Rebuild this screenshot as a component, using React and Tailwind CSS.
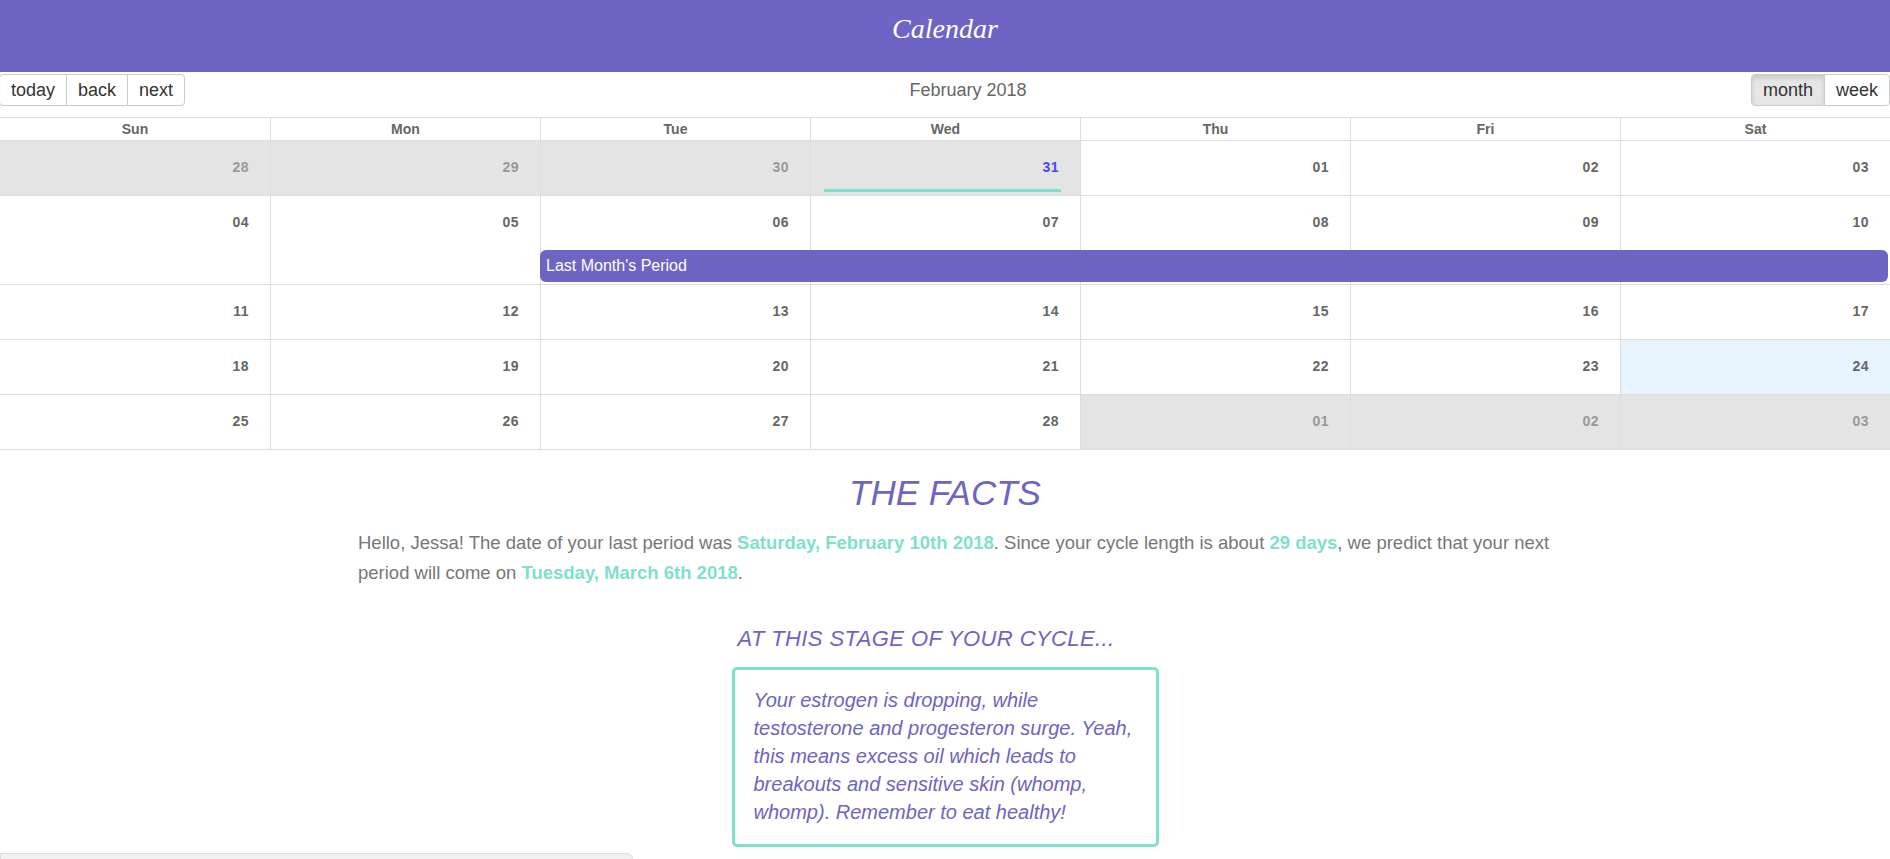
const PURPLE = 'text-[#6d64c4]';

const weeks = [
  [
    { d: '28', other: true },
    { d: '29', other: true },
    { d: '30', other: true },
    { d: '31', other: true, marked: true },
    { d: '01' },
    { d: '02' },
    { d: '03' },
  ],
  [{ d: '04' }, { d: '05' }, { d: '06' }, { d: '07' }, { d: '08' }, { d: '09' }, { d: '10' }],
  [{ d: '11' }, { d: '12' }, { d: '13' }, { d: '14' }, { d: '15' }, { d: '16' }, { d: '17' }],
  [{ d: '18' }, { d: '19' }, { d: '20' }, { d: '21' }, { d: '22' }, { d: '23' }, { d: '24', today: true }],
  [
    { d: '25' },
    { d: '26' },
    { d: '27' },
    { d: '28' },
    { d: '01', other: true },
    { d: '02', other: true },
    { d: '03', other: true },
  ],
];

const dayNames = ['Sun', 'Mon', 'Tue', 'Wed', 'Thu', 'Fri', 'Sat'];
const colStart = ['col-start-1', 'col-start-2', 'col-start-3', 'col-start-4', 'col-start-5', 'col-start-6', 'col-start-7'];

export default function App() {
  return (
    <div className="min-h-screen bg-white font-['Liberation_Sans',Arial,sans-serif]">
      {/* ── Header ── */}
      <header className="h-[72px] bg-[#6d64c4] flex items-center justify-center">
        <h1 className="font-['Liberation_Serif','Times_New_Roman',serif] italic text-white text-[28px] leading-none -mt-[14px]">
          Calendar
        </h1>
      </header>

      {/* ── Toolbar ── */}
      <div className="h-[45px] pt-[2px] flex items-start">
        <div className="flex -ml-px">
          <ToolButton first>today</ToolButton>
          <ToolButton>back</ToolButton>
          <ToolButton last>next</ToolButton>
        </div>
        <div className="flex-1 text-center text-[18px] text-[#666] leading-[32px]">February 2018</div>
        <div className="flex">
          <ToolButton first active>month</ToolButton>
          <ToolButton last>week</ToolButton>
        </div>
      </div>

      {/* ── Month grid ── */}
      <div className="border-t border-[#ddd]">
        <div className="grid grid-cols-7 border-b border-[#ddd]">
          {dayNames.map((n, i) => (
            <div
              key={n}
              className={`h-[22px] text-center text-[14px] font-bold text-[#666] leading-[22px] ${i ? 'border-l border-[#ddd]' : ''}`}
            >
              {n}
            </div>
          ))}
        </div>

        {weeks.map((week, wi) => (
          <div
            key={wi}
            className={`grid grid-cols-7 border-b border-[#ddd] ${wi === 1 ? 'grid-rows-[54px_34px]' : 'grid-rows-[54px]'}`}
          >
            {week.map((c, i) => (
              <DayCell key={i} cell={c} col={i} tall={wi === 1} />
            ))}
            {wi === 1 && (
              <div className="col-start-3 col-end-8 row-start-2 z-10 h-[32px] mr-[2px] rounded-[6px] bg-[#6d64c4] text-white text-[16px] leading-[32px] pl-[6px]">
                Last Month's Period
              </div>
            )}
          </div>
        ))}
      </div>

      {/* ── The facts ── */}
      <section className="pt-[23px]">
        <h2 className={`text-center italic text-[35px] leading-[40px] ${PURPLE}`}>THE FACTS</h2>
        <p className="mt-[15px] ml-[358px] w-[1200px] text-[18.5px] leading-[30px] text-[#777]">
          Hello, Jessa! The date of your last period was{' '}
          <b className="text-[#80dfcd]">Saturday, February 10th 2018</b>. Since your cycle length is about{' '}
          <b className="text-[#80dfcd]">29 days</b>, we predict that your next period will come on{' '}
          <b className="text-[#80dfcd]">Tuesday, March 6th 2018</b>.
        </p>

        <h3 className={`mt-[38px] text-center italic text-[22px] leading-[25px] tracking-[0.4px] -ml-[38px] ${PURPLE}`}>
          AT THIS STAGE OF YOUR CYCLE...
        </h3>

        <div className="mt-[16px] mx-auto w-[427px] border-[3px] border-[#80dfcd] rounded-[5px] pt-[16px] pb-[18px] pl-[19px] pr-[15px]">
          <p className={`italic text-[20px] leading-[28px] ${PURPLE}`}>
            Your estrogen is dropping, while testosterone and progesteron surge. Yeah, this means excess oil which
            leads to breakouts and sensitive skin (whomp, whomp). Remember to eat healthy!
          </p>
        </div>

        <div className="mt-[6px] w-[633px] h-[24px] bg-[#f1f1f1] border border-[#ddd] rounded-tr-[6px]" />
      </section>
    </div>
  );
}

function ToolButton({ children, first, last, active }) {
  return (
    <button
      className={`h-[32px] px-[11px] text-[18px] leading-none text-[#333] border border-[#ccc] ${
        first ? 'rounded-l-[4px]' : '-ml-px'
      } ${last ? 'rounded-r-[4px]' : ''} ${
        active ? 'bg-[#e6e6e6] border-[#adadad] shadow-[inset_0_3px_5px_rgba(0,0,0,0.125)]' : 'bg-white'
      }`}
    >
      {children}
    </button>
  );
}

function DayCell({ cell, col, tall }) {
  const bg = cell.today ? 'bg-[#e8f4fd]' : cell.other ? 'bg-[#e4e4e4]' : 'bg-white';
  const color = cell.marked ? 'text-[#4b46f0]' : cell.other ? 'text-[#999]' : 'text-[#666]';
  return (
    <div
      className={`flex flex-col ${colStart[col]} ${tall ? 'row-start-1 row-end-3' : 'row-start-1'} ${bg} ${
        col === 0 ? '' : 'border-l border-[#ddd]'
      }`}
    >
      <div className={`pt-[18px] pr-[21px] text-right text-[14px] font-bold leading-[16px] tracking-[0.5px] ${color}`}>
        {cell.d}
      </div>
      {cell.marked && <div className="mt-auto mb-[3px] ml-[13px] mr-[19px] h-[3px] bg-[#80dfcd]" />}
    </div>
  );
}
